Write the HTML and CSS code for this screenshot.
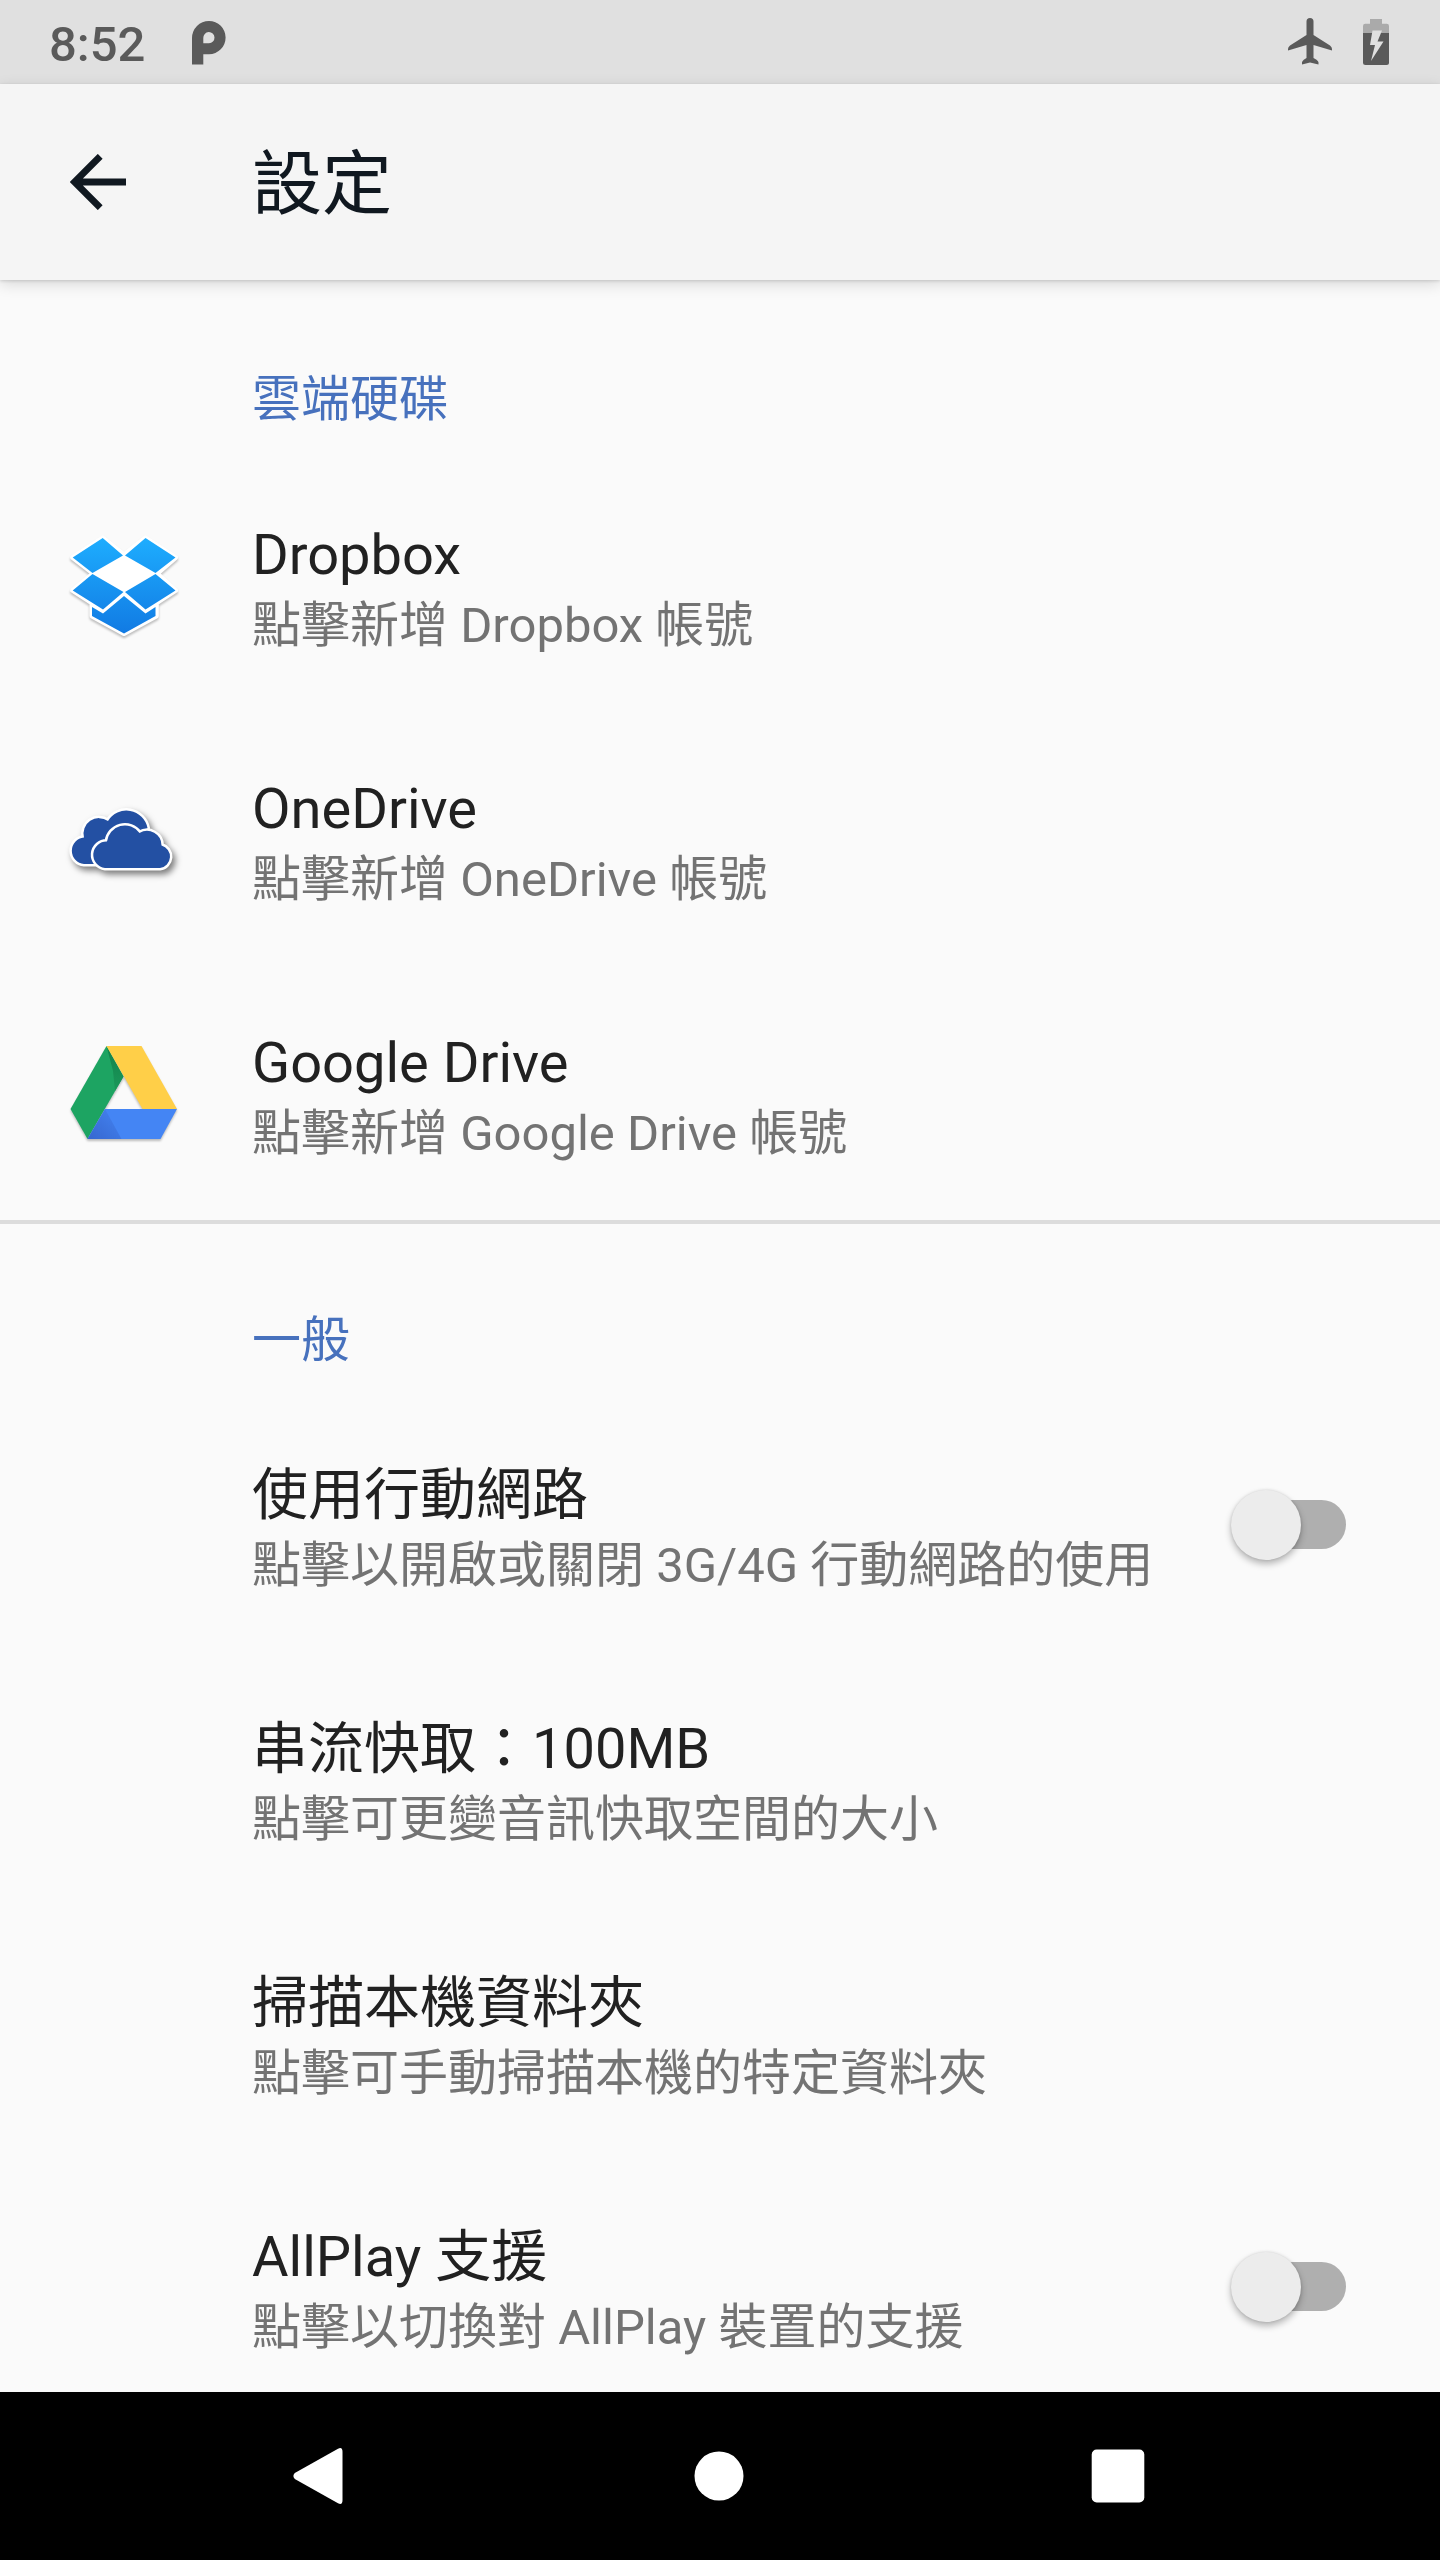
FILE: index.html
```html
<!DOCTYPE html>
<html lang="zh-Hant">
<head>
<meta charset="utf-8">
<title>設定</title>
<link rel="stylesheet" href="styles.css">
</head>
<body>
<div class="screen">
  <header class="status">
    <span class="clock">8:52</span>
    <svg class="p-icon" width="34" height="44" viewBox="0 0 34 44"><path fill="#5a5a5a" fill-rule="evenodd" d="M0 43.500V17A17 17 0 0 1 17 0A16.600 16.600 0 0 1 17 33.200H11.300V43.500ZM11.300 22.300H17A5.600 5.600 0 1 0 11.300 17Z"/></svg>
    <span class="spacer"></span>
    <svg class="plane" width="44" height="47" viewBox="0 0 44 47"><path fill="#5a5a5a" d="M18.500 3.500A3.500 3.500 0 0 1 25.500 3.500V17L42 27.500Q44 29 44 31V32.500L25.500 27V40L28.500 41.800Q30.500 43.200 30.500 44.500V46.500L22 44.500L14 46.500V44.500Q14 43.200 15.800 41.800L18.500 40V27L0 32.500V31Q0 29 2 27.500L18.500 17Z"/></svg>
    <svg class="battery" width="26" height="46" viewBox="0 0 26 46"><path fill="#aaa" d="M0 14V7Q0 4.700 2.300 4.700H7V0H19V4.700H23.700Q26 4.700 26 7V14Z"/><path fill="#5a5a5a" d="M0 14H26V43.500Q26 46 23.500 46H2.500Q0 46 0 43.500Z"/><path fill="#e0e0e0" d="M9.500 11.500H19L14.500 22.500H20.500L8 42L12 26H7Z"/></svg>
  </header>
  <nav class="appbar">
    <svg class="back" width="56" height="56" viewBox="0 0 56 56"><path fill="none" stroke="#101820" stroke-width="6.800" d="M56 28H5M30.200 2.300L4.500 28L30.200 53.700"/></svg>
    <h1>設定</h1>
  </nav>
  <main class="list">
    <section>
      <h2>雲端硬碟</h2>
      <div class="row">
        <svg class="logo" width="116" height="116" viewBox="0 0 116 116">
          <defs><linearGradient id="db" gradientUnits="userSpaceOnUse" x1="0" y1="8" x2="0" y2="106"><stop offset="0" stop-color="#1eaeff"/><stop offset="1" stop-color="#117ae3"/></linearGradient></defs>
          <g class="shade"><path fill="#fff" stroke="#fff" stroke-width="5" stroke-linejoin="round" d="M35.700 10L57 27L78.500 10L108.500 29.500L90 45.500L108.500 62.500L89.300 75V88L57 105.500L25 88V75L5.700 62.500L26.500 45.500L5.700 29.500Z"/></g>
          <path fill="url(#db)" d="M35.700 10L56 27.500L25.500 45L5.700 29.500ZM78.500 10L108.500 29.500L88.500 45L58 27.500ZM25.500 46L56.500 64L36 81.500L5.700 62.500ZM88.500 46L108.500 62.500L78.500 81.500L58 64ZM57 68L78.500 85.500L88.500 79V88L57 105.500L25 88V79L36 85.500Z"/>
        </svg>
        <div class="text"><h3>Dropbox</h3><p>點擊新增 Dropbox 帳號</p></div>
      </div>
      <div class="row">
        <svg class="logo" width="116" height="116" viewBox="0 0 116 116">
          <g class="cloud">
            <path d="M17 82A13.300 13.300 0 0 1 17 55.500A15.500 15.500 0 0 1 41 39A21.500 21.500 0 0 1 80.500 46L66 82Z"/>
            <path d="M38 86A13.300 13.300 0 0 1 40 59.500A18 18 0 0 1 72.500 51A14.500 14.500 0 0 1 94.500 63.500A11.500 11.500 0 0 1 93 86Z"/>
          </g>
        </svg>
        <div class="text"><h3>OneDrive</h3><p>點擊新增 OneDrive 帳號</p></div>
      </div>
      <div class="row">
        <svg class="logo" width="116" height="116" viewBox="0 0 116 116">
          <defs>
            <linearGradient id="bs" x1="0" y1="1" x2="1" y2="0"><stop offset="0" stop-color="#3667cf"/><stop offset="1" stop-color="#4484f3"/></linearGradient>
            <linearGradient id="gs" x1="0" y1="0" x2="0" y2="1"><stop offset="0" stop-color="#12814a"/><stop offset="1" stop-color="#1a985a"/></linearGradient>
          </defs>
          <g class="shade">
            <path fill="#1da462" d="M39.500 10L56.500 40.500L20.500 103L3.500 73Z"/>
            <path fill="url(#gs)" d="M39.500 10L56.500 40.500L48 55L46 35Z"/>
            <path fill="#ffcf48" d="M39.500 10H74.500L110 73H75.500Z"/>
            <path fill="#4485f4" d="M38 73H110L93.500 103H20.500Z"/>
            <path fill="url(#bs)" d="M38 73L54.500 103H20.500Z"/>
          </g>
        </svg>
        <div class="text"><h3>Google Drive</h3><p>點擊新增 Google Drive 帳號</p></div>
      </div>
    </section>
    <section class="general">
      <h2>一般</h2>
      <div class="row">
        <div class="text"><h3>使用行動網路</h3><p>點擊以開啟或關閉 3G/4G 行動網路的使用</p></div>
        <span class="switch"><i></i></span>
      </div>
      <div class="row">
        <div class="text"><h3>串流快取：100MB</h3><p>點擊可更變音訊快取空間的大小</p></div>
      </div>
      <div class="row">
        <div class="text"><h3>掃描本機資料夾</h3><p>點擊可手動掃描本機的特定資料夾</p></div>
      </div>
      <div class="row">
        <div class="text"><h3>AllPlay 支援</h3><p>點擊以切換對 AllPlay 裝置的支援</p></div>
        <span class="switch"><i></i></span>
      </div>
    </section>
  </main>
  <footer class="navbar">
    <svg width="50" height="56" viewBox="0 0 50 56"><path fill="#fff" d="M45 .8Q49.500-1.500 49.500 4V52Q49.500 57.500 45 55.200L1.800 31Q-1 28 1.800 25Z"/></svg>
    <svg class="home" width="50" height="50" viewBox="0 0 50 50"><circle cx="25" cy="25" r="24.500" fill="#fff"/></svg>
    <svg width="54" height="54" viewBox="0 0 54 54"><rect x=".7" y=".5" width="52.600" height="53" rx="5" fill="#fff"/></svg>
  </footer>
</div>
</body>
</html>
```
FILE: styles.css
```css
* { box-sizing: border-box; margin: 0; padding: 0; }
body {
  width: 1440px;
  background: #fafafa;
  font-family: Roboto, "Noto Sans CJK TC", sans-serif;
  color: #212121;
}
.screen { display: flex; flex-direction: column; height: 2560px; overflow: hidden; }
.status {
  flex: none;
  display: flex;
  align-items: flex-start;
  height: 84px;
  padding: 0 51px 0 49px;
  background: #e0e0e0;
}
.clock { width: 143px; font-size: 49px; font-weight: 500; line-height: 89px; color: #5a5a5a; }
.p-icon { margin-top: 21px; }
.spacer { flex: 1; }
.plane { margin: 18px 31px 0 0; }
.battery { margin-top: 19px; }
.appbar {
  flex: none;
  z-index: 1;
  display: flex;
  align-items: center;
  height: 196px;
  padding-left: 70px;
  background: #f5f5f5;
  box-shadow: 0 4px 14px rgba(0, 0, 0, .14), 0 1px 3px rgba(0, 0, 0, .14);
}
.back { margin-right: 126px; }
h1 { padding-top: 6px; font-size: 70px; font-weight: 400; line-height: 100px; color: #101820; }
.list { flex: 1; min-height: 0; overflow: hidden; }
h2 {
  height: 178px;
  padding: 78px 0 0 252px;
  font-size: 49px;
  font-weight: 400;
  line-height: 84px;
  color: #4771bd;
}
.general { border-top: 4px solid #dcdcdc; }
.general h2 { height: 173px; padding-top: 75px; }
.row { display: flex; align-items: center; height: 254px; padding-left: 252px; }
.logo { flex: none; margin: 2px 69px 0 -185px; overflow: visible; }
.shade { filter: drop-shadow(0 2px 1px rgba(0, 0, 0, .25)); }
.cloud {
  fill: #2350a3;
  stroke: #fff;
  stroke-width: 5px;
  stroke-linejoin: round;
  paint-order: stroke;
  filter: drop-shadow(3px 4px 3px rgba(0, 0, 0, .5));
}
.text { flex: 1; padding-top: 6px; white-space: nowrap; }
.general .text { padding-top: 8px; }
h3 { font-size: 56px; font-weight: 400; line-height: 76px; }
p { font-size: 49px; line-height: 66px; color: #737373; }
.switch {
  display: flex;
  align-items: center;
  width: 98px;
  height: 49px;
  margin-right: 94px;
  border-radius: 25px;
  background: #afafaf;
}
.switch i {
  flex: none;
  width: 70px;
  height: 70px;
  margin: 2px 0 0 -17px;
  border-radius: 50%;
  background: #ececec;
  box-shadow: 0 4px 7px rgba(0, 0, 0, .28), 0 0 3px rgba(0, 0, 0, .12);
}
.navbar {
  flex: none;
  display: flex;
  align-items: center;
  justify-content: space-between;
  height: 168px;
  padding: 0 295px 0 293px;
  background: #000;
}
.home { margin-left: 4px; }
```
